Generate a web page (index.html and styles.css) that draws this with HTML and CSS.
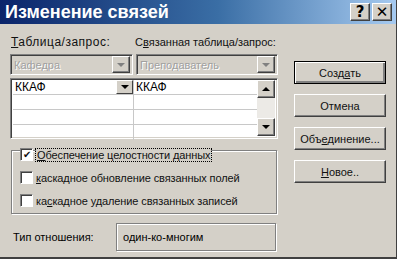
FILE: index.html
```html
<!DOCTYPE html>
<html lang="ru">
<head>
  <meta charset="UTF-8" />
  <title>Изменение связей</title>
  <link rel="stylesheet" href="styles.css">
</head>
<body>
  <div class="dialog">
    <div class="titlebar">
      <span class="title">Изменение связей</span>
      <div class="title-btns">
        <span class="tbtn">?</span>
        <span class="tbtn close">✕</span>
      </div>
    </div>

    <div class="content">
      <div class="left">
        <div class="labels">
          <span class="lbl lbl-left"><u>Т</u>аблица/запрос:</span>
          <span class="lbl lbl-right">С<u>в</u>язанная таблица/запрос:</span>
        </div>
        <div class="combos">
          <div class="combo combo-left">
            <span class="combo-text">Кафедра</span>
            <span class="drop"><span class="arrow-down grey"></span></span>
          </div>
          <div class="combo combo-right">
            <span class="combo-text">Преподаватель</span>
            <span class="drop"><span class="arrow-down grey"></span></span>
          </div>
        </div>

        <div class="grid">
          <div class="rows">
            <div class="row">
              <div class="cell cell-left"><span>ККАФ</span><span class="cell-drop"><span class="arrow-down"></span></span></div>
              <div class="cell">ККАФ</div>
            </div>
            <div class="row"><div class="cell cell-left"></div><div class="cell"></div></div>
            <div class="row"><div class="cell cell-left"></div><div class="cell"></div></div>
            <div class="row last"><div class="cell cell-left"></div><div class="cell"></div></div>
          </div>
          <div class="scroll">
            <span class="sbtn"><span class="arrow-up"></span></span>
            <span class="strack"></span>
            <span class="sbtn"><span class="arrow-down"></span></span>
          </div>
        </div>

        <div class="group">
          <label class="check focus"><span class="box checked">✔</span><span class="check-text"><u>О</u>беспечение целостности данных</span></label>
          <label class="check"><span class="box"></span><span class="check-text"><u>к</u>аскадное обновление связанных полей</span></label>
          <label class="check"><span class="box"></span><span class="check-text">ка<u>с</u>кадное удаление связанных записей</span></label>
        </div>

        <div class="relation">
          <span class="rel-label">Тип отношения:</span>
          <span class="rel-box">один-ко-многим</span>
        </div>
      </div>

      <div class="right">
        <button class="btn default">Созд<u>а</u>ть</button>
        <button class="btn">Отмена</button>
        <button class="btn">Объ<u>е</u>динение...</button>
        <button class="btn"><u>Н</u>овое..</button>
      </div>
    </div>
  </div>
</body>
</html>
```

FILE: styles.css
```css
* {
  box-sizing: border-box;
}
body {
  margin: 0;
  padding: 0;
  font-family: "Liberation Sans", Arial, sans-serif;
  font-size: 11px;
  color: #000;
}
.dialog {
  width: 397px;
  height: 259px;
  background-color: #d4d0c8;
  border-bottom: 2px solid #404040;
  border-right: 1px solid #404040;
  overflow: hidden;
}
.titlebar {
  height: 24px;
  background: linear-gradient(to right, #0a246a 0%, #3a6ea5 55%, #a6caf0 100%);
  display: flex;
  align-items: center;
  justify-content: space-between;
  padding: 0 4px 0 5px;
}
.title {
  color: #fff;
  font-family: "Liberation Sans", Arial, sans-serif;
  font-weight: bold;
  font-size: 18px;
}
.title-btns {
  display: flex;
  gap: 2px;
}
.tbtn {
  width: 20px;
  height: 18px;
  background-color: #d4d0c8;
  border: 1px solid;
  border-color: #fff #404040 #404040 #fff;
  box-shadow: inset -1px -1px 0 #808080;
  display: flex;
  align-items: center;
  justify-content: center;
  font-weight: bold;
  font-size: 15px;
  font-family: "DejaVu Sans", sans-serif;
}
.tbtn.close {
  font-weight: normal;
}
.content {
  display: flex;
  padding: 0 0 0 10px;
}
.left {
  width: 268px;
}
.labels {
  display: flex;
  height: 29px;
  padding-top: 11px;
  font-size: 12px;
  color: #111;
  white-space: nowrap;
}
.lbl-left {
  flex: none;
  width: 125px;
  padding-left: 1px;
  letter-spacing: 0.5px;
}
.lbl-right {
  font-size: 11px;
  padding-top: 1px;
}
.combos {
  display: flex;
  gap: 3px;
  height: 21px;
  margin-top: 1px;
}
.combo {
  height: 21px;
  background-color: #d4d0c8;
  border: 1px solid;
  border-color: #808080 #fff #fff #808080;
  box-shadow: inset 1px 1px 0 #404040;
  display: flex;
  align-items: center;
  padding: 2px 2px 2px 3px;
}
.combo-left {
  width: 123px;
}
.combo-right {
  width: 142px;
}
.combo-text {
  flex: 1;
  min-width: 0;
  overflow: hidden;
  white-space: nowrap;
  color: #a0a0a0;
  font-size: 11px;
  text-shadow: 1px 1px 0 #fff;
}
.drop {
  flex: none;
  width: 18px;
  height: 17px;
  background-color: #d4d0c8;
  border: 1px solid;
  border-color: #fff #404040 #404040 #fff;
  box-shadow: inset -1px -1px 0 #808080;
  display: flex;
  align-items: center;
  justify-content: center;
}
.arrow-down {
  width: 0;
  height: 0;
  border-left: 4px solid transparent;
  border-right: 4px solid transparent;
  border-top: 4px solid #000;
}
.arrow-down.grey {
  border-top-color: #808080;
}
.arrow-up {
  width: 0;
  height: 0;
  border-left: 4px solid transparent;
  border-right: 4px solid transparent;
  border-bottom: 4px solid #000;
}
.grid {
  margin-top: 3px;
  height: 61px;
  width: 268px;
  background-color: #fff;
  border: 1px solid;
  border-color: #808080 #fff #fff #808080;
  box-shadow: inset 1px 1px 0 #404040, inset -1px -1px 0 #d4d0c8;
  display: flex;
  padding: 1px 2px 2px 2px;
}
.rows {
  flex: 1;
}
.row {
  display: flex;
  height: 15px;
  border-bottom: 1px solid #c8c8c8;
}
.row.last {
  border-bottom: none;
}
.cell {
  flex: 1;
  font-size: 12px;
  line-height: 14px;
  padding-left: 2px;
}
.cell-left {
  flex: none;
  width: 121px;
  border-right: 1px solid #c8c8c8;
  display: flex;
  justify-content: space-between;
}
.cell-drop {
  width: 17px;
  height: 14px;
  background-color: #d4d0c8;
  border: 1px solid;
  border-color: #fff #404040 #404040 #fff;
  display: flex;
  align-items: center;
  justify-content: center;
}
.scroll {
  width: 18px;
  display: flex;
  flex-direction: column;
}
.sbtn {
  height: 18px;
  background-color: #d4d0c8;
  border: 1px solid;
  border-color: #fff #404040 #404040 #fff;
  box-shadow: inset -1px -1px 0 #808080;
  display: flex;
  align-items: center;
  justify-content: center;
}
.strack {
  flex: 1;
  background-color: #eceae6;
}
.group {
  margin-top: 11px;
  margin-left: 1px;
  width: 266px;
  height: 64px;
  border: 1px solid #808080;
  box-shadow: 1px 1px 0 #fff, inset 1px 1px 0 #fff;
  display: flex;
  flex-direction: column;
  padding: 0 0 0 8px;
}
.check {
  display: flex;
  align-items: center;
  height: 23px;
  font-size: 11px;
  letter-spacing: -0.1px;
  color: #111;
}
.check.focus {
  margin-top: -8px;
}
.check.focus .check-text {
  outline: 1px dotted #000;
  background-color: #d4d0c8;
  padding: 0 1px;
}
.box {
  width: 13px;
  height: 13px;
  background-color: #fff;
  border: 1px solid;
  border-color: #808080 #fff #fff #808080;
  box-shadow: inset 1px 1px 0 #404040;
  margin-right: 3px;
  font-size: 10px;
  line-height: 11px;
  text-align: center;
  flex: none;
}
.relation {
  display: flex;
  align-items: center;
  margin-top: 9px;
  font-size: 11px;
}
.rel-label {
  width: 106px;
  padding-left: 3px;
}
.rel-box {
  width: 160px;
  height: 28px;
  border: 1px solid #808080;
  box-shadow: 1px 1px 0 #fff, inset 1px 1px 0 #fff;
  display: flex;
  align-items: center;
  padding-left: 6px;
}
.right {
  display: flex;
  flex-direction: column;
  gap: 10px;
  margin-left: 16px;
  padding-top: 37px;
}
.btn {
  width: 92px;
  height: 23px;
  background-color: #d4d0c8;
  border: 1px solid;
  border-color: #fff #404040 #404040 #fff;
  box-shadow: inset -1px -1px 0 #808080;
  font-family: "Liberation Sans", Arial, sans-serif;
  font-size: 11px;
  color: #111;
  padding: 0;
}
.btn.default {
  border: 1px solid #000;
  box-shadow: inset 1px 1px 0 #fff, inset -2px -2px 0 #808080;
}
```
